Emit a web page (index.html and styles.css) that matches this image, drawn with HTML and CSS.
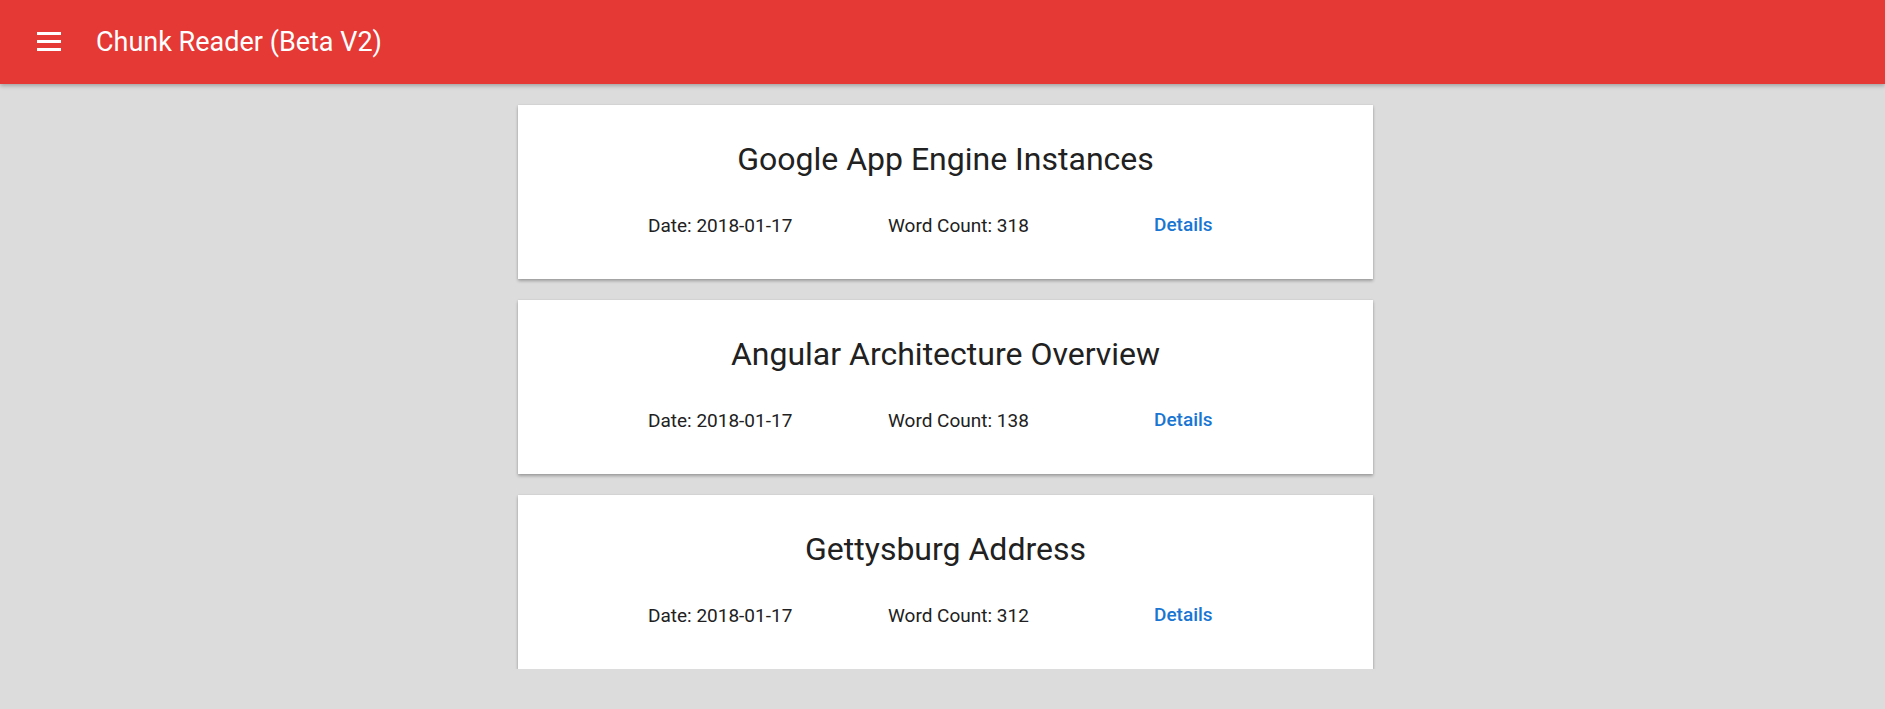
FILE: index.html
```html
<!DOCTYPE html>
<html>
<head>
<meta charset="utf-8">
<link rel="stylesheet" href="styles.css">
</head>
<body>
<header class="toolbar">
  <svg class="menu-icon" width="24" height="20" viewBox="0 0 24 20">
    <rect x="0" y="0" width="24" height="3" fill="#fff"/>
    <rect x="0" y="8" width="24" height="3" fill="#fff"/>
    <rect x="0" y="16" width="24" height="3" fill="#fff"/>
  </svg>
  <span class="app-title">Chunk Reader (Beta V2)</span>
</header>
<main class="list">
  <section class="card">
    <h2 class="card-title">Google App Engine Instances</h2>
    <div class="meta">
      <span class="meta-date">Date: 2018-01-17</span>
      <span class="meta-count">Word Count: 318</span>
      <a class="details">Details</a>
    </div>
  </section>
  <section class="card">
    <h2 class="card-title">Angular Architecture Overview</h2>
    <div class="meta">
      <span class="meta-date">Date: 2018-01-17</span>
      <span class="meta-count">Word Count: 138</span>
      <a class="details">Details</a>
    </div>
  </section>
  <section class="card">
    <h2 class="card-title">Gettysburg Address</h2>
    <div class="meta">
      <span class="meta-date">Date: 2018-01-17</span>
      <span class="meta-count">Word Count: 312</span>
      <a class="details">Details</a>
    </div>
  </section>
</main>
</body>
</html>
```

FILE: styles.css
```css
html, body {
  margin: 0;
  padding: 0;
  background: #dcdcdc;
  font-family: Roboto, "Liberation Sans", sans-serif;
}
.toolbar {
  height: 84px;
  background: #e53935;
  display: flex;
  align-items: center;
  box-shadow: 0 2px 4px rgba(0,0,0,0.25);
  position: relative;
}
.menu-icon {
  margin-left: 37px;
  margin-right: 35px;
  flex: none;
}
.app-title {
  color: #fff;
  font-size: 27px;
  font-weight: 400;
}
.list {
  display: flex;
  flex-direction: column;
  align-items: center;
  gap: 21px;
  padding-top: 21px;
  padding-left: 6px;
}
.card {
  width: 855px;
  height: 174px;
  background: #fff;
  box-shadow: 0 2px 3px rgba(0,0,0,0.28), 0 0 2px rgba(0,0,0,0.08);
  box-sizing: border-box;
  padding-top: 34px;
}
.card-title {
  margin: 0;
  text-align: center;
  font-size: 32px;
  font-weight: 400;
  color: #212121;
  line-height: 40px;
}
.meta {
  display: grid;
  grid-template-columns: 240px 266px auto;
  padding-left: 130px;
  margin-top: 35px;
  font-size: 19px;
  color: #212121;
  line-height: 24px;
}
.details {
  color: #1976d2;
  font-weight: 500;
  margin-top: -1px;
}
```
